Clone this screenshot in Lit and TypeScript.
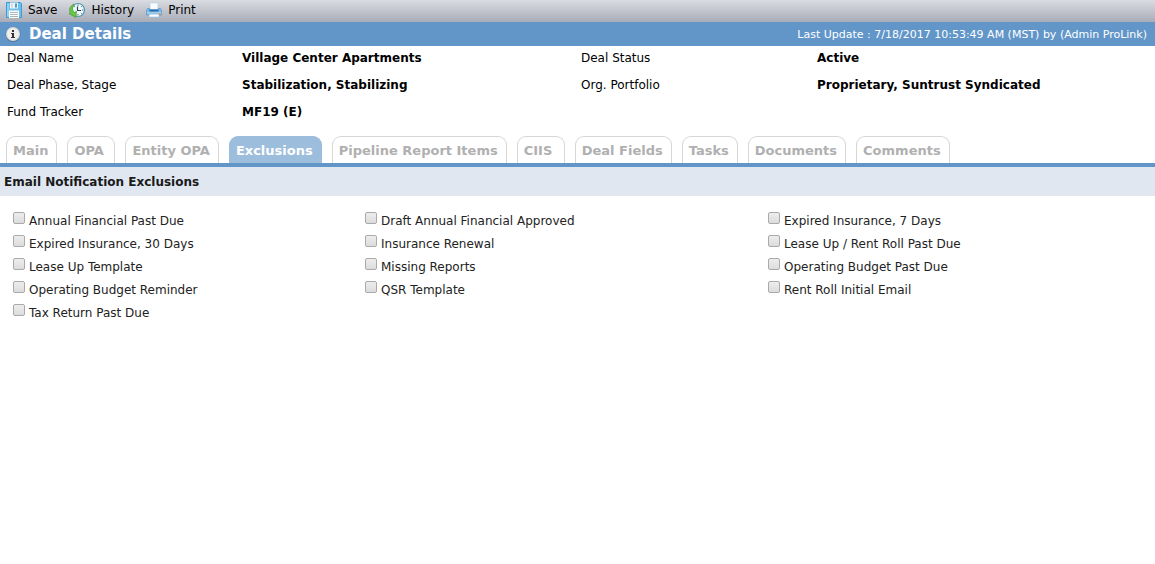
import { LitElement, html, css, svg } from "lit";
import { customElement, state } from "lit/decorators.js";
import { classMap } from "lit/directives/class-map.js";

const TABS = [
  "Main", "OPA", "Entity OPA", "Exclusions", "Pipeline Report Items",
  "CIIS", "Deal Fields", "Tasks", "Documents", "Comments",
];

const FIELDS: [string, string][] = [
  ["Deal Name", "Village Center Apartments"],
  ["Deal Status", "Active"],
  ["Deal Phase, Stage", "Stabilization, Stabilizing"],
  ["Org. Portfolio", "Proprietary, Suntrust Syndicated"],
  ["Fund Tracker", "MF19 (E)"],
];

const EXCLUSIONS = [
  "Annual Financial Past Due", "Draft Annual Financial Approved", "Expired Insurance, 7 Days",
  "Expired Insurance, 30 Days", "Insurance Renewal", "Lease Up / Rent Roll Past Due",
  "Lease Up Template", "Missing Reports", "Operating Budget Past Due",
  "Operating Budget Reminder", "QSR Template", "Rent Roll Initial Email",
  "Tax Return Past Due",
];

const saveIcon = svg`
  <path d="M.5.500h14l1 1v14H.5z" fill="#6fc0ea" stroke="#3d9bd0"/>
  <path d="M1.500 1.500h1v13h-1z" fill="#b5e3f8"/>
  <path d="M4 .5h8v6H4z" fill="#f1f5f8"/>
  <path d="M5 1.500h2v4H5z" fill="#d5dde4"/>
  <path d="M9 1.500h2v4H9z" fill="#4d9cc8"/>
  <path d="M3 8.500h10V16H3z" fill="#fff"/>
  <path d="M4 10.500h8M4 12.500h8M4 14.500h8" stroke="#a9b4bd"/>`;

const historyIcon = svg`
  <circle cx="9" cy="8" r="6.500" fill="#f2f9fd" stroke="#4d9aae" stroke-width="1.200"/>
  <path d="M9 2.500V4M9 12v1.500M12.800 8h1.700M12.800 4.200l-.9.900M12.800 11.800l-.9-.9M5.200 4.200l.9.900" stroke="#52707f"/>
  <path d="M8.500 4.500v4h3.500" fill="none" stroke="#2d4655" stroke-width="1.200"/>
  <path d="M5 2C1 4-.2 7.300 1.300 10.500L0 11.500l6.800 4 .7-6-2.300 1C3.300 8 3 5.500 5 3.500z" fill="#6cc644" stroke="#3a9a2b" stroke-width=".7"/>`;

const printIcon = svg`
  <path d="M4 .8h8V8H4z" fill="#f8fbfe" stroke="#b4cde2" stroke-width=".8"/>
  <path d="M1.500 6.500h2V8h9V6.500h2l1.100 2v4.500H.4V8.500z" fill="#80b8e4" stroke="#5b9cd0" stroke-width=".8"/>
  <path d="M3.500 7.500h9v2h-9z" fill="#2470b0"/>
  <path d="M1 10.500h14v1H1z" fill="#c8e2f5"/>
  <path d="M3.200 12h9.600l.7 3.200h-11z" fill="#fff" stroke="#86add0" stroke-width=".8"/>
  <path d="M13 11.500h1.500V13H13z" fill="#e8894a"/>`;

const infoIcon = svg`
  <circle cx="8" cy="8.400" r="7.400" fill="#4f6f92"/>
  <circle cx="8" cy="8" r="7" fill="#dededc"/>
  <circle cx="8" cy="8" r="5.800" fill="#efefed"/>
  <path d="M7 4h2v2H7zM6 7h3v4h1v1H6v-1h1V8H6z" fill="#333"/>`;

const icon = (shape: unknown) =>
  html`<svg class="icon" viewBox="0 0 16 16" width="16" height="16" aria-hidden="true">${shape}</svg>`;

@customElement("app-root")
export class AppRoot extends LitElement {
  static styles = css`
    :host {
      display: block;
      background: #fff;
      color: #000;
      font: 12px/25px "DejaVu Sans", Verdana, sans-serif;
    }
    * { box-sizing: border-box; }
    button { font: inherit; color: inherit; margin: 0; cursor: pointer; }
    .icon { flex: none; display: block; }
    .toolbar {
      display: flex;
      gap: 12px;
      height: 22px;
      padding: 0 6px;
      background: linear-gradient(#dadce2, #a8acb7);
    }
    .tool {
      display: flex;
      align-items: center;
      gap: 6px;
      padding: 0 0 2px;
      border: 0;
      background: none;
      line-height: 20px;
    }
    .title-bar {
      display: flex;
      align-items: center;
      gap: 8px;
      height: 24px;
      padding: 0 8px 0 5px;
      background: #6296c9;
      color: #fff;
    }
    .title { margin: 0; font-size: 15px; line-height: 24px; }
    .updated { margin-left: auto; font-size: 11px; }
    .fields {
      display: grid;
      grid-template-columns: 235fr 339fr 236fr 338fr;
      row-gap: 2px;
      margin: 0 0 11px;
      padding-left: 7px;
    }
    .fields dt, .fields dd { margin: 0; white-space: nowrap; }
    .fields dd { font-weight: bold; }
    .tabs {
      display: flex;
      gap: 10px;
      padding-left: 6px;
      border-bottom: 4px solid #6296c9;
    }
    .tab {
      min-width: 48px;
      height: 27px;
      padding: 1px 7px 0 6px;
      border: 1px solid #d6d6d6;
      border-bottom: 0;
      border-radius: 9px 9px 0 0;
      background: #fff;
      color: #b0b0b0;
      font-size: 13px;
      font-weight: bold;
      line-height: 25px;
      text-align: left;
      white-space: nowrap;
    }
    .tab.active { background: #9dbddd; border-color: #9dbddd; color: #fff; }
    .tab { padding-right: 8px; }
    .section {
      margin: 0;
      padding: 3px 4px 1px;
      background: #e0e7f1;
      color: #1a1a1a;
      font-size: 12px;
    }
    .options {
      display: grid;
      grid-template-columns: 352fr 403fr 387fr;
      padding: 12px 0 0 13px;
    }
    .option { display: flex; align-items: flex-start; gap: 4px; color: #222; white-space: nowrap; }
    .option input {
      appearance: none;
      flex: none;
      width: 12px;
      height: 12px;
      margin: 4px 0;
      border: 1px solid #aaa;
      border-radius: 2px;
      background: linear-gradient(#ededed, #dcdcdc);
    }
    .option input:checked { background: #6296c9; }
    .option label { height: 23px; line-height: 27px; }
  `;

  @state() private tab = "Exclusions";

  render() {
    return html`
      <nav class="toolbar" aria-label="Actions">
        <button class="tool">${icon(saveIcon)}Save</button>
        <button class="tool">${icon(historyIcon)}History</button>
        <button class="tool">${icon(printIcon)}Print</button>
      </nav>
      <header class="title-bar">
        ${icon(infoIcon)}
        <h1 class="title">Deal Details</h1>
        <span class="updated">Last Update : 7/18/2017 10:53:49 AM (MST) by (Admin ProLink)</span>
      </header>
      <dl class="fields">
        ${FIELDS.map(([name, value]) => html`<dt>${name}</dt><dd>${value}</dd>`)}
      </dl>
      <div class="tabs" role="tablist">
        ${TABS.map((name) => html`<button
          role="tab"
          class=${classMap({ tab: true, active: name === this.tab })}
          aria-selected=${name === this.tab}
          @click=${() => { this.tab = name; }}
        >${name}</button>`)}
      </div>
      <h2 class="section">Email Notification Exclusions</h2>
      <div class="options">
        ${EXCLUSIONS.map((name, i) => html`<div class="option">
          <input type="checkbox" id="exclusion-${i}"><label for="exclusion-${i}">${name}</label>
        </div>`)}
      </div>
    `;
  }
}
